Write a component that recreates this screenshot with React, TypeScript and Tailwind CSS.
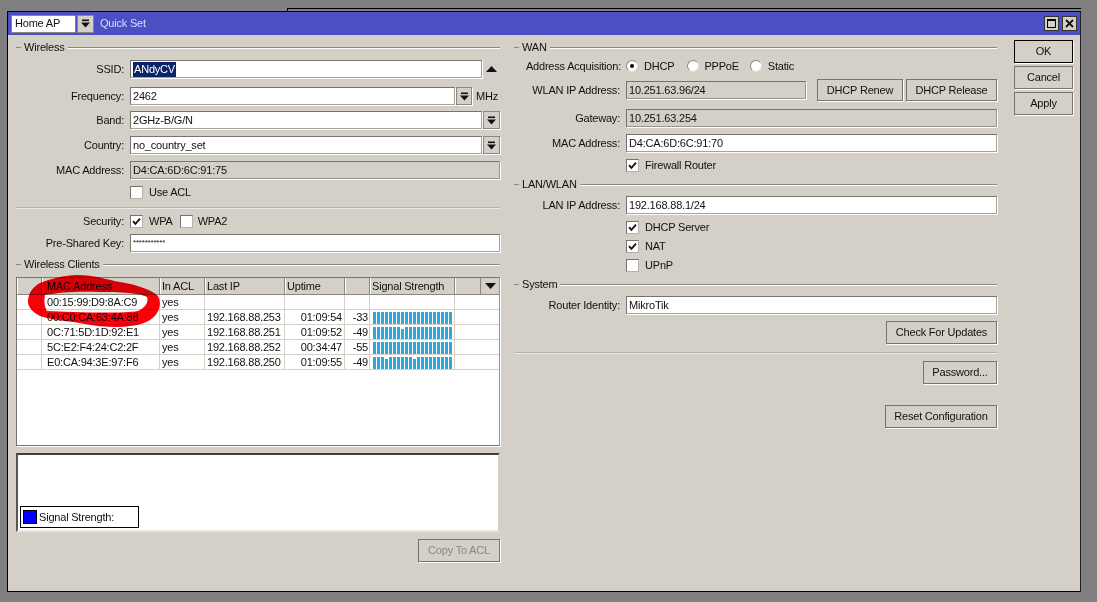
const F = "font-[Liberation_Sans,Arial,sans-serif]";

function Arrow() {
  return (
    <svg width="9" height="9" viewBox="0 0 9 9" aria-hidden="true">
      <rect x="1" y="0.5" width="7" height="1.6" fill="#111" />
      <path d="M0 3.4h9L4.5 8.6z" fill="#111" />
    </svg>
  );
}

function Drop({ w = "w-[17px]" }: { w?: string }) {
  return (
    <div className={`${w} h-[18px] shrink-0 flex items-center justify-center bg-[#d4d0c8] border border-[#8a8780] shadow-[1px_1px_0_#fff]`}>
      <Arrow />
    </div>
  );
}

function Field({ value, disabled, w = "flex-1", selected, tiny }: { value: string; disabled?: boolean; w?: string; selected?: boolean; tiny?: boolean }) {
  return (
    <div className={`${w} min-w-0 h-[18px] flex items-center pl-[2px] border border-t-[#77746e] border-l-[#77746e] ${disabled ? "bg-[#d4d0c8] border-r-[#99968f] border-b-[#99968f] text-[#111]" : "bg-white border-r-[#a5a29b] border-b-[#a5a29b] text-[#111]"} shadow-[1px_1px_0_#fff]`}>
      {selected ? <span className="bg-[#0a246a] text-white leading-[15px] px-[1px]">{value}</span> : <span className={`whitespace-nowrap ${tiny ? "text-[8px]" : ""}`}>{value}</span>}
    </div>
  );
}

function Row({ label, labelW = "w-[125px]", mt, children }: { label: string; labelW?: string; mt: string; children: React.ReactNode }) {
  return (
    <div className={`flex items-center ${mt}`}>
      <div className={`${labelW} shrink-0 pr-[6px] text-right text-[#111] whitespace-nowrap`}>{label}</div>
      <div className="flex-1 flex items-center min-w-0">{children}</div>
    </div>
  );
}

function Legend({ title, mt }: { title: string; mt?: string }) {
  return (
    <div className={`flex items-center h-[13px] ${mt ?? ""}`}>
      <div className="w-[5px] h-[1px] bg-[#8a8780]" />
      <span className="px-[3px] text-[#111]">{title}</span>
      <div className="flex-1 h-[2px] border-t border-t-[#8a8780] border-b border-b-white" />
    </div>
  );
}

function Check({ checked }: { checked?: boolean }) {
  return (
    <div className="w-[13px] h-[13px] shrink-0 bg-white border border-[#77746e] border-r-[#b5b2aa] border-b-[#b5b2aa] flex items-center justify-center">
      {checked && (
        <svg width="9" height="9" viewBox="0 0 9 9" aria-hidden="true">
          <path d="M1 4.2 3.4 6.8 8 1.6" fill="none" stroke="#111" strokeWidth="1.8" />
        </svg>
      )}
    </div>
  );
}

function CheckRow({ label, checked, mt }: { label: string; checked?: boolean; mt: string }) {
  return (
    <div className={`flex items-center gap-[6px] h-[14px] ${mt}`}>
      <Check checked={checked} />
      <span className="text-[#111]">{label}</span>
    </div>
  );
}

function Radio({ label, checked, gap }: { label: string; checked?: boolean; gap: string }) {
  return (
    <div className={`flex items-center ${gap}`}>
      <div className="w-[12px] h-[12px] rounded-full bg-white border border-[#8a8780] border-r-[#ddd] border-b-[#ddd] flex items-center justify-center">
        {checked && <div className="w-[4px] h-[4px] rounded-full bg-black" />}
      </div>
      <span className="text-[#111]">{label}</span>
    </div>
  );
}

function Btn({ label, cls, dark, disabled }: { label: string; cls: string; dark?: boolean; disabled?: boolean }) {
  return (
    <div className={`${cls} shrink-0 flex items-center justify-center bg-[#d4d0c8] border ${dark ? "border-black" : "border-[#77746e]"} shadow-[1px_1px_0_#fff] whitespace-nowrap ${disabled ? "text-[#8a8780]" : "text-[#111]"}`}>
      {label}
    </div>
  );
}

const cols = ["w-[25px]", "w-[118px]", "w-[45px]", "w-[80px]", "w-[60px]", "w-[25px]", "w-[85px]", "flex-1"];
const heads = ["", "MAC Address", "In ACL", "Last IP", "Uptime", "", "Signal Strength", ""];
const pads = ["pl-[1px]", "pl-[4px]", "pl-[1px]", "pl-[1px]", "pl-[1px]", "pl-[1px]", "pl-[1px]", "pl-[1px]"];
const data = [
  { mac: "00:15:99:D9:8A:C9", ip: "", up: "", dbm: "", dips: null as number[] | null },
  { mac: "00:C0:CA:63:4A:88", ip: "192.168.88.253", up: "01:09:54", dbm: "-33", dips: [] },
  { mac: "0C:71:5D:1D:92:E1", ip: "192.168.88.251", up: "01:09:52", dbm: "-49", dips: [7] },
  { mac: "5C:E2:F4:24:C2:2F", ip: "192.168.88.252", up: "00:34:47", dbm: "-55", dips: [] },
  { mac: "E0:CA:94:3E:97:F6", ip: "192.168.88.250", up: "01:09:55", dbm: "-49", dips: [3, 10] },
];

function Bars({ dips }: { dips: number[] }) {
  return (
    <div className="flex items-end gap-[1px] h-[13px] ml-[3px]">
      {Array.from({ length: 20 }, (_, i) => (
        <div key={i} className={`w-[3px] bg-[#2fa8e0] ${dips.includes(i) ? "h-[10px]" : "h-[12px]"}`} />
      ))}
    </div>
  );
}

function ClientsTable() {
  return (
    <div className="mt-[6px] h-[169px] bg-white border border-t-[#77746e] border-l-[#77746e] border-r-[#99968f] border-b-[#77746e] shadow-[1px_1px_0_#fff] overflow-hidden">
      <div className="flex h-[17px] bg-[#d4d0c8] border-b border-[#8a8780]">
        {heads.map((h, i) => (
          <div key={i} className={`${cols[i]} ${pads[i]} h-full flex items-center border-r border-[#8a8780] border-l border-l-white text-[#111] whitespace-nowrap`}>{h}</div>
        ))}
        <div className="w-[18px] flex items-center justify-center">
          <svg width="11" height="6" viewBox="0 0 11 6" aria-hidden="true"><path d="M0 0h11L5.5 6z" fill="#111" /></svg>
        </div>
      </div>
      {data.map((r) => (
        <div key={r.mac} className="flex h-[15px] border-b border-[#d4d0c8] text-[#111] whitespace-nowrap">
          <div className={`${cols[0]} h-full border-r border-[#d4d0c8]`} />
          <div className={`${cols[1]} h-full flex items-center pl-[5px] border-r border-[#d4d0c8]`}>{r.mac}</div>
          <div className={`${cols[2]} h-full flex items-center pl-[2px] border-r border-[#d4d0c8]`}>yes</div>
          <div className={`${cols[3]} h-full flex items-center pl-[2px] border-r border-[#d4d0c8]`}>{r.ip}</div>
          <div className={`${cols[4]} h-full flex items-center justify-end pr-[2px] border-r border-[#d4d0c8]`}>{r.up}</div>
          <div className={`${cols[5]} h-full flex items-center justify-end pr-[1px] border-r border-[#d4d0c8]`}>{r.dbm}</div>
          <div className={`${cols[6]} h-full flex items-center border-r border-[#d4d0c8]`}>{r.dips && <Bars dips={r.dips} />}</div>
          <div className="flex-1" />
        </div>
      ))}
    </div>
  );
}

function Chart() {
  return (
    <div className="mt-[7px] h-[79px] bg-white border-2 border-t-[#404040] border-l-[#555] border-r-[#d4d0c8] border-b-[#e8e6e0] flex flex-col justify-end pl-[2px] pb-[2px]">
      <div className="w-[119px] h-[22px] border border-black flex items-center pl-[2px] gap-[2px] bg-white">
        <div className="w-[14px] h-[14px] bg-[#0000ff] border border-black" />
        <span className="text-[#111]">Signal Strength:</span>
      </div>
    </div>
  );
}

function Scribble() {
  return (
    <svg className="absolute left-0 top-0 pointer-events-none mix-blend-darken" width="180" height="340" viewBox="0 0 180 340" aria-hidden="true">
      <path
        fillRule="evenodd"
        fill="#fb0008"
        d="M77 275C95 275 108 280 120 282C138 285 152 290 158 296C161 302 160 308 157 313C153 320 143 325 130 326C118 328 100 327 85 324C70 321 50 320 40 316C32 312 27 306 28 300C29 292 33 287 40 283C50 279 65 275 77 275ZM45 295C44 300 44 306 47 311C70 312 120 314 138 311C145 308 149 302 147 297C140 293 120 292 100 292C80 291 60 292 45 295Z"
      />
    </svg>
  );
}

export default function App() {
  return (
    <div className={`${F} relative w-[1097px] h-[602px] overflow-hidden bg-[#808080] text-[11px] tracking-[-0.2px] leading-none pt-[8px]`}>
      <div className="ml-[287px] w-[794px] h-[3px] border-t border-l border-black" />
      <div className="ml-[7px] w-[1074px] h-[581px] border border-black border-r-[#222] bg-[#d4d0c8] flex flex-col">
        <div className="h-[23px] bg-[#4c4fc4] flex items-center pl-[3px] pr-[3px]">
          <div className="w-[65px] h-[18px] bg-white border border-[#8a8780] flex items-center pl-[3px] text-[#111]">Home AP</div>
          <div className="ml-[1px] w-[17px] h-[18px] bg-[#d4d0c8] border border-[#8a8780] flex items-center justify-center"><Arrow /></div>
          <span className="ml-[6px] text-[#d9dcff]">Quick Set</span>
          <div className="ml-auto flex gap-[3px]">
            <div className="w-[15px] h-[15px] bg-[#d4d0c8] border border-[#333] flex items-center justify-center">
              <div className="w-[9px] h-[9px] border border-black border-t-2" />
            </div>
            <div className="w-[15px] h-[15px] bg-[#d4d0c8] border border-[#333] flex items-center justify-center">
              <svg width="9" height="9" viewBox="0 0 9 9" aria-hidden="true"><path d="M1 1l7 7M8 1 1 8" stroke="#111" strokeWidth="1.8" /></svg>
            </div>
          </div>
        </div>

        <div className="flex-1 flex pl-[8px] pt-[6px]">
          <div className="w-[484px] shrink-0">
            <Legend title="Wireless" />
            <Row label="SSID:" labelW="w-[114px]" mt="mt-[6px]">
              <Field value="ANdyCV" w="w-[352px]" selected />
              <svg className="ml-[4px]" width="11" height="6" viewBox="0 0 11 6" aria-hidden="true"><path d="M0 6h11L5.5 0z" fill="#111" /></svg>
            </Row>
            <Row label="Frequency:" labelW="w-[114px]" mt="mt-[9px]">
              <Field value="2462" w="w-[325px]" />
              <div className="ml-[1px]"><Drop w="w-[16px]" /></div>
              <span className="ml-[4px] text-[#111]">MHz</span>
            </Row>
            <Row label="Band:" labelW="w-[114px]" mt="mt-[6px]">
              <Field value="2GHz-B/G/N" w="w-[352px]" />
              <div className="ml-[1px]"><Drop /></div>
            </Row>
            <Row label="Country:" labelW="w-[114px]" mt="mt-[7px]">
              <Field value="no_country_set" w="w-[352px]" />
              <div className="ml-[1px]"><Drop /></div>
            </Row>
            <Row label="MAC Address:" labelW="w-[114px]" mt="mt-[7px]">
              <Field value="D4:CA:6D:6C:91:75" disabled />
            </Row>
            <div className="pl-[114px]"><CheckRow label="Use ACL" mt="mt-[6px]" /></div>
            <div className="mt-[8px] h-[2px] border-t border-t-[#b5b2aa] border-b border-b-[#ecebe6]" />
            <Row label="Security:" labelW="w-[114px]" mt="mt-[6px]">
              <Check checked />
              <span className="ml-[6px] text-[#111]">WPA</span>
              <div className="ml-[7px]"><Check /></div>
              <span className="ml-[5px] text-[#111]">WPA2</span>
            </Row>
            <Row label="Pre-Shared Key:" labelW="w-[114px]" mt="mt-[6px]">
              <Field value="***********" tiny />
            </Row>
            <Legend title="Wireless Clients" mt="mt-[6px]" />
            <ClientsTable />
            <Chart />
            <div className="mt-[7px] flex justify-end">
              <Btn label="Copy To ACL" cls="w-[82px] h-[23px]" disabled />
            </div>
          </div>

          <div className="w-[483px] ml-[14px] shrink-0">
            <Legend title="WAN" />
            <div className="mt-[3px] h-[18px] flex items-center">
              <div className="w-[107px] text-right text-[#111] whitespace-nowrap">Address Acquisition:</div>
              <div className="ml-[5px] flex">
                <Radio label="DHCP" checked gap="gap-[6px]" />
                <Radio label="PPPoE" gap="ml-[13px] gap-[5px]" />
                <Radio label="Static" gap="ml-[11px] gap-[6px]" />
              </div>
            </div>
            <Row label="WLAN IP Address:" labelW="w-[112px]" mt="mt-[4px]">
              <Field value="10.251.63.96/24" disabled w="w-[180px]" />
              <Btn label="DHCP Renew" cls="ml-[11px] w-[86px] h-[22px]" />
              <Btn label="DHCP Release" cls="ml-[3px] w-[91px] h-[22px]" />
            </Row>
            <Row label="Gateway:" labelW="w-[112px]" mt="mt-[8px]">
              <Field value="10.251.63.254" disabled />
            </Row>
            <Row label="MAC Address:" labelW="w-[112px]" mt="mt-[7px]">
              <Field value="D4:CA:6D:6C:91:70" />
            </Row>
            <div className="pl-[112px]"><CheckRow label="Firewall Router" checked mt="mt-[6px]" /></div>
            <Legend title="LAN/WLAN" mt="mt-[6px]" />
            <Row label="LAN IP Address:" labelW="w-[112px]" mt="mt-[5px]">
              <Field value="192.168.88.1/24" />
            </Row>
            <div className="pl-[112px]">
              <CheckRow label="DHCP Server" checked mt="mt-[6px]" />
              <CheckRow label="NAT" checked mt="mt-[5px]" />
              <CheckRow label="UPnP" mt="mt-[5px]" />
            </div>
            <Legend title="System" mt="mt-[6px]" />
            <Row label="Router Identity:" labelW="w-[112px]" mt="mt-[5px]">
              <Field value="MikroTik" />
            </Row>
            <div className="mt-[7px] flex justify-end">
              <Btn label="Check For Updates" cls="w-[111px] h-[23px]" />
            </div>
            <div className="mt-[8px] h-[2px] border-t border-t-[#b5b2aa] border-b border-b-[#ecebe6]" />
            <div className="mt-[7px] flex justify-end">
              <Btn label="Password..." cls="w-[74px] h-[23px]" />
            </div>
            <div className="mt-[21px] flex justify-end">
              <Btn label="Reset Configuration" cls="w-[112px] h-[23px]" />
            </div>
          </div>

          <div className="ml-[17px] -mt-[1px] flex flex-col gap-[3px]">
            <Btn label="OK" cls="w-[59px] h-[23px]" dark />
            <Btn label="Cancel" cls="w-[59px] h-[23px]" />
            <Btn label="Apply" cls="w-[59px] h-[23px]" />
          </div>
        </div>
      </div>
      <Scribble />
    </div>
  );
}
